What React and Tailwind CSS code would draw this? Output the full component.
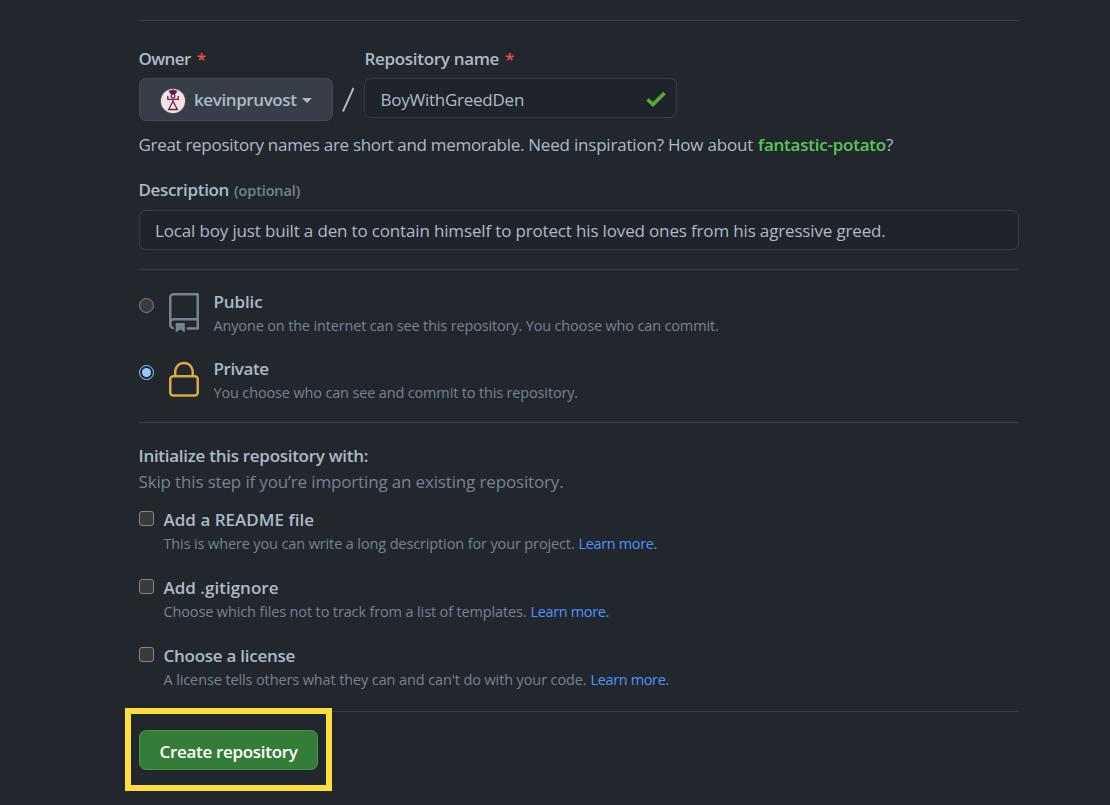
import React from "react";

const Divider = () => <div className="h-px w-full shrink-0 bg-[#373e47]" />;

function BookIcon() {
  return (
    <svg viewBox="0 0 24 24" className="h-10 w-10 shrink-0" fill="#768390">
      <path
        fillRule="evenodd"
        d="M3 2.75A2.75 2.75 0 0 1 5.75 0h14.5a.75.75 0 0 1 .75.75v20.5a.75.75 0 0 1-.75.75h-6a.75.75 0 0 1 0-1.5h5.25v-4H6A1.5 1.5 0 0 0 4.5 18v.75c0 .716.43 1.334 1.05 1.605a.75.75 0 0 1-.6 1.374A3.25 3.25 0 0 1 3 18.75v-16zM19.5 1.5V15H6c-.546 0-1.059.146-1.5.401V2.75c0-.69.56-1.25 1.25-1.25H19.5z"
      />
      <path d="M7 18.25a.25.25 0 0 1 .25-.25h5a.25.25 0 0 1 .25.25v5.01a.25.25 0 0 1-.397.201l-2.206-1.604a.25.25 0 0 0-.294 0L7.397 23.46a.25.25 0 0 1-.397-.2v-5.01z" />
    </svg>
  );
}

function LockIcon() {
  return (
    <svg viewBox="0 0 24 24" className="h-10 w-10 shrink-0" fill="#daaa3f">
      <path
        fillRule="evenodd"
        d="M6 9V7.25C6 3.845 8.503 1 12 1s6 2.845 6 6.25V9h.5a2.5 2.5 0 0 1 2.5 2.5v8a2.5 2.5 0 0 1-2.5 2.5h-13A2.5 2.5 0 0 1 3 19.500v-8A2.5 2.5 0 0 1 5.500 9H6zm1.500-1.750C7.500 4.580 9.422 2.500 12 2.500c2.578 0 4.500 2.080 4.500 4.750V9h-9V7.250zm-3 4.250a1 1 0 0 1 1-1h13a1 1 0 0 1 1 1v8a1 1 0 0 1-1 1h-13a1 1 0 0 1-1-1v-8z"
      />
    </svg>
  );
}

function Avatar() {
  return (
    <svg viewBox="0 0 26 26" className="h-[26px] w-[26px] shrink-0">
      <circle cx="13" cy="13" r="12.800" fill="#59616b" />
      <circle cx="13" cy="13" r="12" fill="#f6e2e2" />
      <path d="M8.500 3 13 1.500 17.500 3l-2 3h-5z" fill="#62204f" />
      <circle cx="13" cy="8" r="1.900" fill="#f6e2e2" stroke="#62204f" strokeWidth="1.200" />
      <path
        d="M7.800 8v3.300h10.400V8M13 11.300v2.500M13 13.200 8.600 21.500h8.800L13 13.200"
        fill="none"
        stroke="#62204f"
        strokeWidth="1.300"
      />
    </svg>
  );
}

function Visibility({ checked, icon, title, titleTrack, text, textTrack }) {
  return (
    <label className="flex h-[67px]">
      <span
        className={
          "mt-[9px] flex h-[15px] w-[15px] shrink-0 items-center justify-center rounded-full border " +
          (checked ? "border-[#99c8ff] bg-[#22272e]" : "border-[#858585] bg-[#3b3b3b]")
        }
      >
        {checked && <span className="h-[9px] w-[9px] rounded-full bg-[#99c8ff]" />}
      </span>
      <span className="ml-[10px] mt-1">{icon}</span>
      <span className="ml-[9.5px] flex flex-col">
        <span className={"h-[25px] font-semibold leading-[26px] " + titleTrack}>{title}</span>
        <span className={"text-[14.5px] leading-6 text-[#768390] " + textTrack}>{text}</span>
      </span>
    </label>
  );
}

function Option({ title, titleTrack, text, textTrack }) {
  return (
    <label className="flex h-[68px]">
      <span className="mt-1 h-[15px] w-[15px] shrink-0 rounded-[3px] border border-[#858585] bg-[#3b3b3b]" />
      <span className="ml-[9.5px] flex flex-col">
        <span className={"h-[25px] font-semibold leading-[26px] " + titleTrack}>{title}</span>
        <span className="flex gap-1 text-[14.5px] leading-6 text-[#768390]">
          <span className={textTrack}>{text}</span>
          <a className="tracking-[-0.36px] text-[#4d94ff]">Learn more.</a>
        </span>
      </span>
    </label>
  );
}

export default function App() {
  return (
    <div className="h-[805px] w-full overflow-hidden whitespace-nowrap bg-[#22272e] pl-[139px] pr-[91px] pt-5 font-['Open_Sans',sans-serif] text-[17px] leading-[26px] text-[#adbac7]">
      <Divider />
      <div className="mt-[25px] flex h-[75px]">
        <div className="w-[194px]">
          <div className="-ml-[0.5px] flex h-8 gap-[6px] font-semibold">
            <span className="tracking-[-0.58px]">Owner</span>
            <span className="text-[#e5534b]">*</span>
          </div>
          <button className="flex h-[43px] w-[194px] items-center rounded-[7px] border border-[#444c56] bg-[#373e47] pl-[19.5px]">
            <span className="mt-[3px]">
              <Avatar />
            </span>
            <span className="ml-[8.5px] font-semibold tracking-[-0.4px]">kevinpruvost</span>
            <span className="ml-[5px] mt-0.5 border-x-[5px] border-t-[5px] border-x-transparent border-t-[#adbac7]" />
          </button>
        </div>
        <div className="flex w-[31px] items-start justify-center pr-px pt-[41px]">
          <svg viewBox="0 0 14 26" className="h-[26px] w-[14px]">
            <path d="M2 24.500 12.500 1" stroke="#adbac7" strokeWidth="1.900" />
          </svg>
        </div>
        <div className="w-[313px]">
          <div className="flex h-8 gap-[6px] pl-[0.5px] font-semibold">
            <span className="tracking-[-0.31px]">Repository name</span>
            <span className="text-[#e5534b]">*</span>
          </div>
          <div className="flex h-10 items-center justify-between rounded-[7px] border border-[#373e47] bg-[#1f242b] pl-[15.5px] pr-[10px]">
            <span className="mt-[3px] tracking-[-0.25px]">BoyWithGreedDen</span>
            <svg viewBox="0 0 20 16" className="mt-0.5 h-4 w-5">
              <path d="M1.500 8.500 7 13.500 18.500 2" fill="none" stroke="#57ab30" strokeWidth="3.600" />
            </svg>
          </div>
        </div>
      </div>

      <p className="-ml-[0.5px] mt-[11px] flex h-[26px]">
        <span className="w-[619.500px] tracking-[-0.3px]">
          Great repository names are short and memorable.{" "}
          <span className="tracking-[-0.2px]">Need inspiration? How about</span>
        </span>
        <span className="font-semibold tracking-[-0.23px] text-[#57c558]">fantastic-potato</span>
        <span>?</span>
      </p>
      <div className="-ml-[0.5px] mt-[19px] flex h-[33px] items-baseline gap-[5px] font-semibold">
        <span className="tracking-[-0.34px]">Description</span>
        <span className="text-[14.5px] tracking-[-0.13px] text-[#768390]">(optional)</span>
      </div>
      <div className="flex h-10 items-center rounded-[7px] border border-[#373e47] bg-[#1f242b] pl-[15px]">
        <span className="mt-px tracking-[-0.157px]">
          Local boy just built a den to contain himself to protect his loved ones from his agressive greed.
        </span>
      </div>

      <div className="mt-[19px]">
        <Divider />
      </div>
      <div className="mt-[19px] h-[133px]">
        <Visibility
          icon={<BookIcon />}
          title="Public"
          titleTrack="tracking-[-0.12px]"
          text="Anyone on the internet can see this repository. You choose who can commit."
          textTrack="tracking-[-0.16px]"
        />
        <Visibility
          checked
          icon={<LockIcon />}
          title="Private"
          titleTrack="tracking-[-0.4px]"
          text="You choose who can see and commit to this repository."
          textTrack="tracking-[-0.155px]"
        />
      </div>
      <Divider />

      <div className="-ml-[0.5px] mt-5 h-[26px] font-semibold tracking-[-0.285px]">
        Initialize this repository with:
      </div>
      <p className="-ml-[0.5px] mb-[12px] h-[26px] tracking-[-0.153px] text-[#768390]">
        Skip this step if you’re importing an existing repository.
      </p>
      <div className="h-[204px]">
        <Option
          title="Add a README file"
          titleTrack="tracking-[0.02px]"
          text="This is where you can write a long description for your project."
          textTrack="tracking-[-0.128px]"
        />
        <Option
          title="Add .gitignore"
          titleTrack="tracking-[0.01px]"
          text="Choose which files not to track from a list of templates."
          textTrack="tracking-[-0.137px]"
        />
        <Option
          title="Choose a license"
          titleTrack="tracking-[-0.26px]"
          text="A license tells others what they can and can't do with your code."
          textTrack="tracking-[-0.118px]"
        />
      </div>
      <Divider />

      <div className="-ml-[14px] -mt-1 h-[83px] w-[207px] border-[6px] border-[#ffdd3d] bg-[#22272e] pl-2 pt-4">
        <button className="h-10 w-[179px] rounded-[7px] border border-[#46954a] bg-[#347d39] pt-[3px] font-semibold tracking-[-0.31px] text-white">
          Create repository
        </button>
      </div>
    </div>
  );
}
